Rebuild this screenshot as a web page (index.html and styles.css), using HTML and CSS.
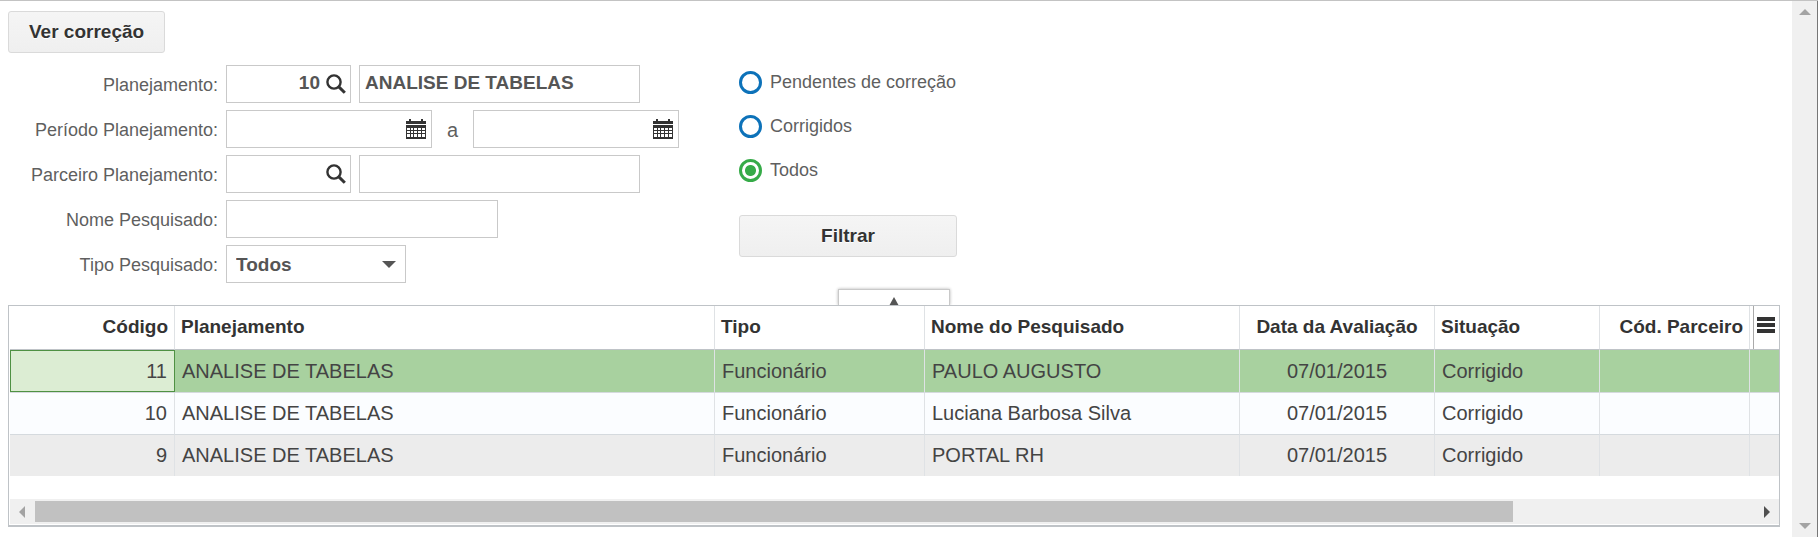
FILE: index.html
```html
<!DOCTYPE html>
<html lang="pt-BR">
<head>
  <meta charset="UTF-8">
  <meta name="viewport" content="width=device-width, initial-scale=1.0">
  <title>Correção de Avaliações</title>
  <link rel="stylesheet" href="styles.css">
</head>

<body>

  <!-- icons -->
  <svg class="sprite" aria-hidden="true">
    <symbol id="icon-search" viewBox="0 0 20 20">
      <circle cx="8" cy="8" r="6.6" fill="none" stroke="currentColor" stroke-width="2.4"/>
      <path d="M12.6 12.6L18.8 18.8" stroke="currentColor" stroke-width="3"/>
    </symbol>
    <symbol id="icon-calendar" viewBox="0 0 20 20">
      <path fill="currentColor" d="M3 0h2v2h10V0h2v2h3v3H0V2h3zM0 6h20v14H0z"/>
      <path fill="#fff" d="M1 9h3v2H1zM5 9h2v2H5zM8 9h3v2H8zM12 9h3v2h-3zM16 9h3v2h-3zM1 12h3v2H1zM5 12h2v2H5zM8 12h3v2H8zM12 12h3v2h-3zM16 12h3v2h-3zM1 15h3v3H1zM5 15h2v3H5zM8 15h3v3H8zM12 15h3v3h-3zM16 15h3v3h-3z"/>
    </symbol>
  </svg>

  <main class="content">
    <button type="button" class="btn">Ver correção</button>

    <form class="filters">
      <div class="fields">
        <label for="codPlanejamento">Planejamento:</label>
        <div class="row">
          <div class="field code">
            <input type="text" id="codPlanejamento" value="10">
            <button type="button" aria-label="Pesquisar planejamento"><svg><use href="#icon-search"/></svg></button>
          </div>
          <div class="field description">
            <input type="text" aria-label="Descrição do planejamento" value="ANALISE DE TABELAS">
          </div>
        </div>

        <label for="dataInicio">Período Planejamento:</label>
        <div class="row">
          <div class="field date">
            <input type="text" id="dataInicio">
            <button type="button" aria-label="Data inicial"><svg><use href="#icon-calendar"/></svg></button>
          </div>
          <label for="dataFim" class="until">a</label>
          <div class="field date">
            <input type="text" id="dataFim">
            <button type="button" aria-label="Data final"><svg><use href="#icon-calendar"/></svg></button>
          </div>
        </div>

        <label for="codParceiro">Parceiro Planejamento:</label>
        <div class="row">
          <div class="field code">
            <input type="text" id="codParceiro">
            <button type="button" aria-label="Pesquisar parceiro"><svg><use href="#icon-search"/></svg></button>
          </div>
          <div class="field description">
            <input type="text" aria-label="Nome do parceiro">
          </div>
        </div>

        <label for="nome">Nome Pesquisado:</label>
        <div class="row">
          <div class="field name">
            <input type="text" id="nome">
          </div>
        </div>

        <label for="tipo">Tipo Pesquisado:</label>
        <div class="row">
          <div class="field type">
            <select id="tipo">
              <option>Todos</option>
              <option>Funcionário</option>
            </select>
            <span class="caret"></span>
          </div>
        </div>
      </div>

      <div class="status">
        <label><input type="radio" name="status" value="pendentes"> Pendentes de correção</label>
        <label><input type="radio" name="status" value="corrigidos"> Corrigidos</label>
        <label><input type="radio" name="status" value="todos" checked> Todos</label>
        <button type="button" class="btn">Filtrar</button>
      </div>
    </form>

    <button type="button" class="collapse" aria-label="Recolher filtros"><span></span></button>

    <div class="grid">
      <table>
        <colgroup>
          <col class="col-code">
          <col class="col-plan">
          <col class="col-type">
          <col class="col-name">
          <col class="col-date">
          <col class="col-status">
          <col class="col-partner">
          <col>
        </colgroup>
        <thead>
          <tr>
            <th class="right">Código</th>
            <th>Planejamento</th>
            <th>Tipo</th>
            <th>Nome do Pesquisado</th>
            <th class="center">Data da Avaliação</th>
            <th>Situação</th>
            <th class="right">Cód. Parceiro</th>
            <th class="menu"><button type="button" aria-label="Colunas"><i></i><i></i><i></i></button></th>
          </tr>
        </thead>
        <tbody>
          <tr class="selected">
            <td class="right current">11</td>
            <td>ANALISE DE TABELAS</td>
            <td>Funcionário</td>
            <td>PAULO AUGUSTO</td>
            <td class="center">07/01/2015</td>
            <td>Corrigido</td>
            <td></td>
            <td></td>
          </tr>
          <tr>
            <td class="right">10</td>
            <td>ANALISE DE TABELAS</td>
            <td>Funcionário</td>
            <td>Luciana Barbosa Silva</td>
            <td class="center">07/01/2015</td>
            <td>Corrigido</td>
            <td></td>
            <td></td>
          </tr>
          <tr>
            <td class="right">9</td>
            <td>ANALISE DE TABELAS</td>
            <td>Funcionário</td>
            <td>PORTAL RH</td>
            <td class="center">07/01/2015</td>
            <td>Corrigido</td>
            <td></td>
            <td></td>
          </tr>
        </tbody>
      </table>

      <div class="hscroll">
        <span class="arrow left"></span>
        <div class="track"><div class="thumb"></div></div>
        <span class="arrow right"></span>
      </div>
    </div>
  </main>

  <div class="vscroll">
    <span class="arrow up"></span>
    <span class="arrow down"></span>
  </div>

</body>
</html>
```

FILE: styles.css
```css
* {
  margin: 0;
  padding: 0;
  box-sizing: border-box;
}

body {
  display: flex;
  min-height: 100vh;
  background: #fff;
  border-top: 1px solid #c3c3c3;
  font-family: "Liberation Sans", Arial, sans-serif;
  font-size: 18px;
  color: #5f5f5f;
}

button,
input,
select {
  font-family: inherit;
}

.sprite {
  position: absolute;
  width: 0;
  height: 0;
}

.content {
  flex: 1;
  min-width: 0;
  padding: 10px 12px 8px 8px;
}

.btn {
  display: block;
  height: 42px;
  padding: 0 20px;
  background: linear-gradient(#f5f5f5, #efefef);
  border: 1px solid #dadada;
  border-radius: 3px;
  color: #333;
  font-size: 19px;
  font-weight: bold;
  text-shadow: 0 1px 0 #fff;
  cursor: pointer;
}

/* Filters */
.filters {
  display: flex;
  gap: 60px;
  margin-top: 12px;
}

.fields {
  display: grid;
  grid-template-columns: 210px auto;
  gap: 7px 8px;
  align-items: center;
}

.fields > label {
  padding-top: 2px;
  text-align: right;
}

.row {
  display: flex;
  align-items: center;
  gap: 8px;
}

.field {
  position: relative;
  display: flex;
  align-items: center;
  height: 38px;
  background: #fff;
  border: 1px solid #c9c9c9;
}

.field input,
.field select {
  flex: 1;
  min-width: 0;
  height: 34px;
  padding: 0 5px;
  background: none;
  border: none;
  outline: none;
  color: #555;
  font-size: 19px;
  font-weight: bold;
}

.field input {
  padding-bottom: 2px;
}

.field select {
  appearance: none;
  padding-left: 9px;
}

.field button {
  height: 20px;
  margin: 0 5px 0 1px;
  background: none;
  border: none;
  color: #333;
  cursor: pointer;
}

.field svg {
  display: block;
  width: 20px;
  height: 20px;
}

.code {
  width: 125px;
}

.code input {
  text-align: right;
}

.code button {
  margin-right: 4px;
}

.description {
  width: 281px;
}

.date {
  width: 206px;
}

.until {
  width: 25px;
  padding-top: 2px;
  font-size: 20px;
  text-align: center;
}

.name {
  width: 272px;
}

.type {
  width: 180px;
}

.caret {
  position: absolute;
  right: 9px;
  border: 7px solid transparent;
  border-top-color: #555;
  border-bottom: none;
  pointer-events: none;
}

/* Status options */
.status {
  display: flex;
  flex-direction: column;
  gap: 9px;
}

.status label {
  display: flex;
  align-items: center;
  gap: 8px;
  height: 35px;
}

.status input {
  appearance: none;
  width: 23px;
  height: 23px;
  border: 3px solid #0d72b9;
  border-radius: 50%;
}

.status input:checked {
  border-color: #36ab48;
  background: radial-gradient(circle, #36ab48 5px, #fff 6px);
}

.status .btn {
  width: 218px;
  margin-top: 18px;
}

.collapse {
  display: block;
  width: 112px;
  height: 16px;
  margin: 6px auto 0;
  padding-top: 7px;
  background: #fff;
  border: 1px solid #c9c9c9;
  border-bottom: none;
  box-shadow: 0 0 3px rgba(0, 0, 0, 0.3);
  clip-path: inset(-3px -3px 0 -3px);
  cursor: pointer;
}

.collapse span {
  display: block;
  width: 10px;
  margin: 0 auto;
  border: 5px solid transparent;
  border-top: none;
  border-bottom: 9px solid #555;
}

/* Grid */
.grid {
  padding-left: 1px;
  border: 1px solid #bfc3c7;
  border-bottom-width: 2px;
}

table {
  width: 100%;
  table-layout: fixed;
  border-collapse: separate;
  border-spacing: 0;
}

.col-code { width: 165px; }
.col-plan { width: 540px; }
.col-type { width: 210px; }
.col-name { width: 315px; }
.col-date { width: 195px; }
.col-status { width: 165px; }
.col-partner { width: 150px; }

th,
td {
  border-right: 1px solid #dfe2e5;
  text-align: left;
  white-space: nowrap;
}

th:last-child,
td:last-child {
  border-right: none;
}

th {
  height: 44px;
  padding: 0 6px 2px;
  border-bottom: 1px solid #bfc3c7;
  color: #333;
  font-size: 19px;
}

td {
  height: 42px;
  padding: 0 7px;
  background: #fbfdff;
  color: #444;
  font-size: 20px;
}

tr:not(:last-child) td {
  border-bottom: 1px solid #d5dade;
}

tr:last-child td {
  height: 41px;
  background: #ececec;
}

tr.selected td {
  height: 43px;
  background: #a8d19f;
}

tr.selected td.current {
  background: #dcedd3;
  box-shadow: inset 0 0 0 1px #4f9143;
  border-right: none;
  padding-right: 8px;
}

.right {
  text-align: right;
}

.center {
  text-align: center;
}

th.menu {
  padding: 0 0 0 3px;
}

.menu button {
  display: flex;
  flex-direction: column;
  gap: 2px;
  width: 100%;
  height: 43px;
  padding: 11px 4px 0 3px;
  background: none;
  border: none;
  border-left: 1px solid #aaa;
  cursor: pointer;
}

.menu i {
  height: 4px;
  background: #333;
}

/* Scrollbars */
.hscroll {
  display: flex;
  align-items: center;
  height: 25px;
  margin: 23px 0 1px;
  background: #f0f0f0;
}

.track {
  flex: 1;
  margin: 0 10px;
}

.thumb {
  width: 86%;
  height: 21px;
  background: #c1c1c1;
}

.arrow {
  border: 6px solid transparent;
}

.arrow.left {
  margin-left: 9px;
  border-left: none;
  border-right-color: #a3a3a3;
}

.arrow.right {
  margin-right: 9px;
  border-right: none;
  border-left-color: #505050;
}

.arrow.up {
  border-top: none;
  border-bottom-color: #a3a3a3;
}

.arrow.down {
  border-bottom: none;
  border-top-color: #a3a3a3;
}

.vscroll {
  display: flex;
  flex-direction: column;
  justify-content: space-between;
  align-items: center;
  width: 26px;
  padding: 8px 0;
  background: #f0f0f0;
  border-right: 1px solid #777;
}
```
